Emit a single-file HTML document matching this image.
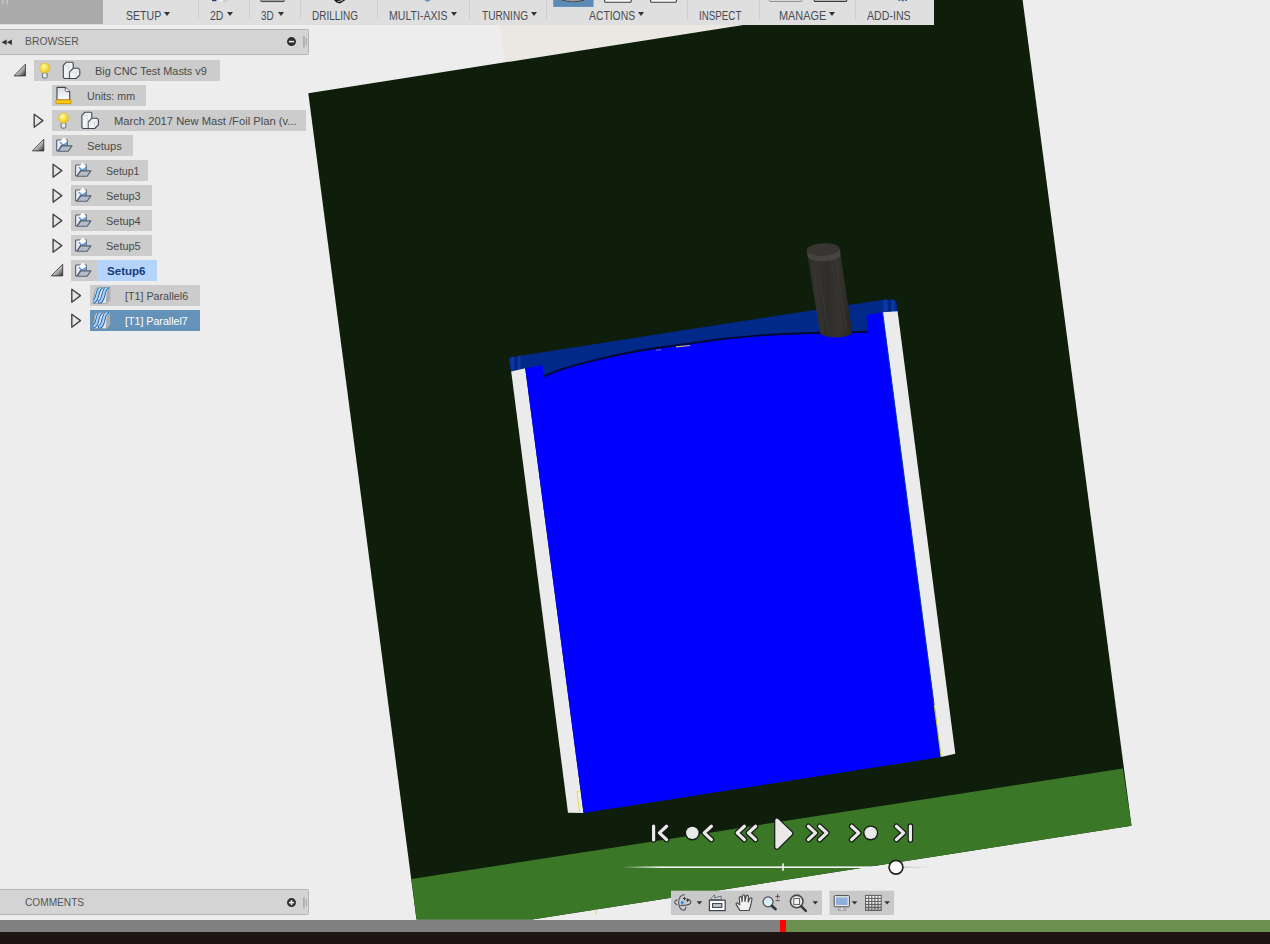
<!DOCTYPE html>
<html>
<head>
<meta charset="utf-8">
<title>Fusion 360 CAM</title>
<style>
html,body{margin:0;padding:0;}
body{width:1270px;height:944px;overflow:hidden;background:#ededed;position:relative;font-family:"Liberation Sans",sans-serif;font-size:11px;color:#4d4d4d;}
#scene{position:absolute;left:0;top:0;width:1270px;height:944px;}
.abs{position:absolute;}
/* toolbar */
#tbdark{left:0;top:0;width:103px;height:24px;background:#ababab;}
#tb{left:103px;top:0;width:830.7px;height:24px;background:#dfdfdf;}
#tbstrip{left:0;top:24px;width:933.7px;height:0.6px;background:#dfdfdf;}
.tb span{position:absolute;top:8.6px;line-height:14px;font-size:12px;color:#474b54;white-space:nowrap;transform-origin:0 0;}
.tb i{position:absolute;top:12px;width:0;height:0;border-left:3px solid transparent;border-right:3px solid transparent;border-top:4px solid #333;}
.tb b{position:absolute;top:0;width:1px;height:19px;background:#cfcfcf;}
/* browser */
.hd{left:0;width:308.6px;height:25.6px;border-radius:0 2px 2px 0;background:#d4d4d4;border-top:1px solid #b4b4b4;border-bottom:1px solid #b4b4b4;border-right:1px solid #b4b4b4;box-sizing:border-box;}
.hd span{position:absolute;left:24.6px;top:4.3px;line-height:14px;font-size:11.8px;color:#555;white-space:nowrap;transform-origin:0 0;}
.box{position:absolute;height:21px;background:#cccccc;}
.t{position:absolute;line-height:14px;font-size:11.8px;white-space:nowrap;color:#4a4a4a;margin-top:0.6px;transform-origin:0 0;}
</style>
</head>
<body>
<svg id="scene" width="1270" height="944" viewBox="0 0 1270 944">
  <defs>
    <linearGradient id="gTool" x1="0" y1="0" x2="1" y2="0"><stop offset="0" stop-color="#2b2926"/><stop offset="0.2" stop-color="#34322e"/><stop offset="0.45" stop-color="#2f2d29"/><stop offset="0.7" stop-color="#353330"/><stop offset="1" stop-color="#282623"/></linearGradient>
    <linearGradient id="gCap" x1="0" y1="0" x2="1" y2="0"><stop offset="0" stop-color="#002a8c"/><stop offset="0.3" stop-color="#0a3cb0"/><stop offset="0.5" stop-color="#001c66"/><stop offset="0.7" stop-color="#0a3cb0"/><stop offset="1" stop-color="#001f70"/></linearGradient>
  </defs>
  <!-- warm tint -->
  <polygon points="499,24 760,24 640,42 505,62" fill="#ebe7e3"/>
  <!-- dark green plane -->
  <polygon points="308.3,93.2 903,0 1022.6,0 1131.5,825.7 532,919.6 416.5,919.6" fill="#0e1e0b"/>
  <!-- light green -->
  <polygon points="411.5,879 1122.9,768.4 1131.5,825.7 532,919.6 416.5,919.6" fill="#3a7726"/>
  <!-- dark blue band -->
  <path d="M508.9,359.6 Q508.6,357.7 510.4,357.4 L530,354.3 L720,324.4 L884,299.7 L892.6,299.7 Q896,300.2 896.7,304 L897.6,311.7 L883,312.2 L868,332.6 L544,377.4 L526,368 L511.2,371.4 Z" fill="#00298a"/>
  <path d="M881.4,300.1 L884,299.7 L892.6,299.7 Q896,300.2 896.7,304 L897.6,311.7 L883,312.2 Z" fill="url(#gCap)"/>
  <path d="M508.9,359.6 Q508.6,357.7 510.4,357.3 L521.5,355.6 L523,368.6 L511.2,371.4 Z" fill="url(#gCap)"/>
  <!-- left white strip -->
  <polygon points="511.2,371.4 525.2,368.2 583.5,813 568,812.8" fill="#ebebeb"/>
  <!-- right white strip -->
  <polygon points="882.6,312.2 897.6,311.2 955.3,753.7 940.9,757" fill="#ebebeb"/>
  <!-- bright blue -->
  <path d="M525.2,368.2 L542.3,365.2 L543.9,376.4 C546.8,375.2 553.3,371.9 561.5,369.3 C569.7,366.7 582.5,363.2 593.0,360.6 C603.5,358.0 614.0,355.6 624.5,353.5 C635.0,351.4 645.5,349.6 656.0,348.0 C666.5,346.4 676.8,345.2 687.5,343.8 C698.2,342.4 706.7,340.8 720.0,339.3 C733.3,337.8 751.5,335.9 767.2,334.9 C783.0,333.8 797.7,333.5 814.5,333.0 C831.3,332.5 859.1,332.0 868.0,331.8 L866.5,314.9 L882.6,312.2 L940.9,757 L583.5,813 Z" fill="#0000ff"/>
  <!-- curve shadow -->
  <path d="M543.9,376.4 C546.8,375.2 553.3,371.9 561.5,369.3 C569.7,366.7 582.5,363.2 593.0,360.6 C603.5,358.0 614.0,355.6 624.5,353.5 C635.0,351.4 645.5,349.6 656.0,348.0 C666.5,346.4 676.8,345.2 687.5,343.8 C698.2,342.4 706.7,340.8 720.0,339.3 C733.3,337.8 751.5,335.9 767.2,334.9 C783.0,333.8 797.7,333.5 814.5,333.0 C831.3,332.5 859.1,332.0 868.0,331.8" fill="none" stroke="#000834" stroke-width="1.9"/>
  <path d="M676,346 L690,344.6" stroke="#c9b98a" stroke-width="1.2" transform="translate(0 0.9)"/><path d="M656,349.2 L661,348.6" stroke="#8a86b0" stroke-width="0.8" transform="translate(0 1)"/>
  <!-- strip edge lines -->
  <path d="M882.6,312.2 L940.9,757" stroke="#0a3f9a" stroke-width="1" fill="none"/>
  <path d="M934.3,705 L941.1,757" stroke="#e8e02a" stroke-width="0.9" fill="none"/>
  <path d="M580.6,791 L576.9,791.7 L579.6,812.6" stroke="#e8e02a" stroke-width="0.9" fill="none"/>
  <!-- tool -->
  <path d="M806.6,250 L839.6,248.6 L852.1,331.8 Q851.4,337.2 836,337.5 Q821.6,337.2 820,332.8 Z" fill="url(#gTool)"/>
  <path d="M811.5,258 L824,333 M816.5,258.6 L829,335 M831,258 L843,333 M834.6,257 L846.6,332" stroke="#3a3834" stroke-width="0.9" fill="none"/>
  <path d="M806.6,250 A16.5,6.2 -3 0 0 839.6,248.6 L840.5,254.4 A16.5,6.2 -3 0 1 807.5,255.8 Z" fill="#464440"/>
  <ellipse cx="823.1" cy="249.4" rx="16.5" ry="6.1" fill="#373532" transform="rotate(-3 823.1 249.4)"/>
  <path d="M595.5,909.4 L596,914.6" stroke="#e8e02a" stroke-width="1"/>
</svg>

<!-- toolbar -->
<div id="tbdark" class="abs"></div>
<div id="tb" class="abs"></div>
<div id="tbstrip" class="abs"></div>
<div class="tb abs" style="left:0;top:0;width:933px;height:24px;">
  <span style="left:126.4px;transform:scaleX(0.882)">SETUP</span><i style="left:163.5px"></i>
  <b style="left:198px"></b>
  <span style="left:210px;transform:scaleX(0.873)">2D</span><i style="left:226.7px"></i>
  <b style="left:249px"></b>
  <span style="left:261.2px;transform:scaleX(0.828)">3D</span><i style="left:277.6px"></i>
  <b style="left:300px"></b>
  <span style="left:312.2px;transform:scaleX(0.833)">DRILLING</span>
  <b style="left:377px"></b>
  <span style="left:389.3px;transform:scaleX(0.880)">MULTI-AXIS</span><i style="left:451.2px"></i>
  <b style="left:469px"></b>
  <span style="left:481.9px;transform:scaleX(0.843)">TURNING</span><i style="left:530.6px"></i>
  <b style="left:546px"></b>
  <span style="left:588.5px;transform:scaleX(0.864)">ACTIONS</span><i style="left:638px"></i>
  <b style="left:687px"></b>
  <span style="left:699.3px;transform:scaleX(0.815)">INSPECT</span>
  <b style="left:759px"></b>
  <span style="left:778.6px;transform:scaleX(0.907)">MANAGE</span><i style="left:828.8px"></i>
  <b style="left:855px"></b>
  <span style="left:867.2px;transform:scaleX(0.884)">ADD-INS</span>
</div>


<svg class="abs" style="left:0;top:0" width="934" height="25" viewBox="0 0 934 25">
  <rect x="2" y="0" width="1.4" height="4.4" fill="#c6c6c6"/><rect x="6.4" y="0" width="1.4" height="4.4" fill="#c6c6c6"/>
  <rect x="212" y="0" width="4.4" height="1.2" fill="#2c3f7c"/>
  <polygon points="218.8,0 229,0 223.2,3.6" fill="#c9cdd2"/><polygon points="218.8,0 223.2,0 223.2,3.6" fill="#eef0f2"/>
  <rect x="260.6" y="-2" width="23.8" height="3.6" rx="1.2" fill="#a2a2a2" stroke="#444" stroke-width="1"/>
  <path d="M334,0 L345.4,0 L340,3.4 L336.4,2.4 Z" fill="#1a1a1a"/><path d="M337.6,1.6 L342.6,0.4" stroke="#eee" stroke-width="0.8"/>
  <path d="M424.4,0 Q427.6,3.4 430.8,0 Z" fill="#6d8fc0"/>
  <rect x="553.2" y="0" width="40.3" height="6.9" fill="#5a8bb7"/>
  <path d="M562,0 Q573,3.6 584,0 Z" fill="#dcdcdc" stroke="#444" stroke-width="0.9"/>
  <rect x="604.6" y="-2" width="26.6" height="4.2" rx="1" fill="#f6f6f6" stroke="#3c3c3c" stroke-width="1.1"/>
  <rect x="650.6" y="-2" width="25.8" height="4.2" rx="1" fill="#f6f6f6" stroke="#3c3c3c" stroke-width="1.1"/>
  <rect x="769.2" y="-2" width="32.8" height="3.4" rx="1" fill="#e4e4e4" stroke="#8a8a8a" stroke-width="1"/>
  <rect x="814.2" y="-2" width="32.6" height="3.4" rx="1" fill="#dcdcdc" stroke="#3c3c3c" stroke-width="1.1"/>
  <path d="M898.4,0 h2 v1 h-2z M901.6,0 h2.4 v1.2 h-2.4z M905,0 h2 v1 h-2z" fill="#4f74b0"/>
</svg>
<!-- browser header -->
<div class="hd abs" style="top:29px"><span style="top:4.31px;transform:scaleX(0.881)">BROWSER</span></div>
<div class="hd abs" style="top:889.3px"><span style="top:4.51px;transform:scaleX(0.859)">COMMENTS</span></div>

<!-- tree -->
<div id="tree">
  <div class="box" style="left:34px;top:60px;width:186px"></div>
  <div class="t" style="left:94.5px;top:63px;transform:scaleX(0.924)">Big CNC Test Masts v9</div>
  <div class="box" style="left:52px;top:85px;width:94px"></div>
  <div class="t" style="left:87.2px;top:88px;transform:scaleX(0.906)">Units: mm</div>
  <div class="box" style="left:52px;top:110px;width:253.6px"></div>
  <div class="t" style="left:113.5px;top:113px;transform:scaleX(0.948)">March 2017 New Mast /Foil Plan (v...</div>
  <div class="box" style="left:52px;top:135px;width:81px"></div>
  <div class="t" style="left:86.9px;top:138px;transform:scaleX(0.947)">Setups</div>
  <div class="box" style="left:71px;top:160px;width:77px"></div>
  <div class="t" style="left:105.8px;top:163px;transform:scaleX(0.896)">Setup1</div>
  <div class="box" style="left:71px;top:185px;width:81px"></div>
  <div class="t" style="left:105.8px;top:188px;transform:scaleX(0.928)">Setup3</div>
  <div class="box" style="left:71px;top:210px;width:81px"></div>
  <div class="t" style="left:105.8px;top:213px;transform:scaleX(0.928)">Setup4</div>
  <div class="box" style="left:71px;top:235px;width:81px"></div>
  <div class="t" style="left:105.8px;top:238px;transform:scaleX(0.928)">Setup5</div>
  <div class="box" style="left:71px;top:260px;width:26px"></div>
  <div class="box" style="left:97px;top:260px;width:59.6px;background:#b4d4fb"></div>
  <div class="t" style="left:106.6px;top:263px;font-weight:bold;color:#163a7c;transform:scaleX(0.979)">Setup6</div>
  <div class="box" style="left:90px;top:285px;width:110px"></div>
  <div class="t" style="left:124.6px;top:288px;transform:scaleX(0.908)">[T1] Parallel6</div>
  <div class="box" style="left:90px;top:310px;width:110px;background:#6592b8"></div>
  <div class="t" style="left:124.6px;top:313px;color:#ffffff;transform:scaleX(0.903)">[T1] Parallel7</div>
</div>


<svg id="icons" class="abs" style="left:0;top:0" width="1270" height="944" viewBox="0 0 1270 944">
<defs>
  <linearGradient id="gArr" x1="0" y1="0" x2="1" y2="1"><stop offset="0.45" stop-color="#dcdcdc"/><stop offset="0.72" stop-color="#8a8a8a"/><stop offset="1" stop-color="#2c2c2c"/></linearGradient>
  <radialGradient id="gBulb" cx="0.4" cy="0.35" r="0.7"><stop offset="0" stop-color="#fffbd0"/><stop offset="0.35" stop-color="#fbe860"/><stop offset="1" stop-color="#e6c21a"/></radialGradient>
  <linearGradient id="gPage" x1="0" y1="0" x2="0" y2="1"><stop offset="0" stop-color="#d8dce2"/><stop offset="1" stop-color="#ffffff"/></linearGradient>
  <!-- expanded arrow: origin = box left/top -->
  <symbol id="exp" overflow="visible"><polygon points="-8.6,4.2 -8.6,15.9 -20,15.9" fill="url(#gArr)" stroke="#2a2a2a" stroke-width="0.8" stroke-linejoin="round"/></symbol>
  <symbol id="col" overflow="visible"><polygon points="-18.2,4.3 -9.5,10.6 -18.2,17.2" fill="#e4e5e8" stroke="#454545" stroke-width="1.4" stroke-linejoin="round"/></symbol>
  <!-- bulb: origin = center of bulb circle -->
  <symbol id="bulb" overflow="visible">
    <rect x="-2.4" y="4.6" width="4.8" height="5.4" rx="1.6" fill="#e6e9ee" stroke="#5d6675" stroke-width="1"/>
    <circle cx="0" cy="0" r="5" fill="url(#gBulb)" stroke="#d9b92a" stroke-width="0.6"/>
  </symbol>
  <!-- component: origin = (0,0) is absolute of first instance offset -->
  <symbol id="comp" overflow="visible">
    <path d="M0,3.2 L3.1,0 L9.1,0 L9.9,1.1 L9.9,6.1 L15.2,6.1 L16.5,7.7 L16.5,12.7 L12.8,16.3 L1.1,16.3 L0,15.1 Z" fill="#f1f2f4" stroke="#3f4652" stroke-width="1.1" stroke-linejoin="round"/>
    <path d="M6.2,9.8 L9.9,6.1 M6.2,9.8 L6.2,16.3" fill="none" stroke="#3f4652" stroke-width="1.1"/>
    <path d="M1,3.5 L5.4,3.5 L5.4,15.5 M6.8,10 L12.6,10 L12.6,15.6 M12.8,9.8 L16,7.4" fill="none" stroke="#d3d6db" stroke-width="0.9"/>
  </symbol>
  <symbol id="doc" overflow="visible">
    <path d="M0.6,0 L8.9,0 L13.3,4.2 L13.3,12.6 L0.6,12.6 Z" fill="url(#gPage)" stroke="#3f4652" stroke-width="1.1" stroke-linejoin="round"/>
    <path d="M8.9,0 L8.9,3 Q9,4.2 10.3,4.2 L13.3,4.2" fill="#fff" stroke="#3f4652" stroke-width="0.9"/>
    <rect x="-0.5" y="12.5" width="15.2" height="3.8" rx="1.2" fill="#ffd61e" stroke="#d48e00" stroke-width="1"/>
    <path d="M1.5,13.6 v1.6 M3.4,13.6 v1.6 M5.3,13.6 v1.6 M7.2,13.6 v1.6 M9.1,13.6 v1.6 M11,13.6 v1.6 M12.9,13.6 v1.6" stroke="#e8a500" stroke-width="0.7"/>
  </symbol>
  <!-- folder: origin = box left/top -->
  <symbol id="fold" overflow="visible">
    <path d="M4.3,5.6 Q4.3,5 5,5 L15,5 L15,10 L9.5,10 L5.8,15.8 L4.3,15.8 Z" fill="#e9ecf0" stroke="#566073" stroke-width="1.1" stroke-linejoin="round"/>
    <polygon points="11.4,2.6 15,6.2 11.4,9.6 7.8,6.2" fill="#ffffff"/>
    <path d="M7.6,7.2 L10.8,10.2 L15,7.3" fill="none" stroke="#4a96e6" stroke-width="1.2"/>
    <polygon points="5.7,16.3 9.5,10.9 19.6,10.9 15.8,16.3" fill="#b5bcc7" stroke="#566073" stroke-width="1.1" stroke-linejoin="round"/>
  </symbol>
  <!-- parallel: origin = box left/top -->
  <clipPath id="cpPar"><path d="M3,18.4 L4.4,9 Q5,4 6.6,3 L19.8,2.3 L19.8,15.2 L15.9,18.7 Z"/></clipPath>
  <symbol id="par" overflow="visible">
    <path d="M3,18.4 L4.4,9 Q5,4 6.6,3 L19.8,2.3 L19.8,15.2 L15.9,18.7 Z" fill="#e6e7e9" stroke="#8f9398" stroke-width="0.8" stroke-linejoin="round"/>
    <path d="M18.6,2.6 Q15.4,9 15.9,18.6 L19.8,15.2 L19.8,2.4 Z" fill="#a9adb3"/>
    <g clip-path="url(#cpPar)">
    <path d="M3.8,16.4 C8.2,15 6.4,5.4 10.8,2.6 M9.8,16.6 C14.2,15.2 12.4,5.4 17,2.4" fill="none" stroke="#1d5aa3" stroke-width="4" stroke-linecap="round"/>
    <path d="M3.8,16.4 C8.2,15 6.4,5.4 10.8,2.6 M9.8,16.6 C14.2,15.2 12.4,5.4 17,2.4" fill="none" stroke="#a8d4fc" stroke-width="2.2" stroke-linecap="round"/>
    </g>
  </symbol>
</defs>
<use href="#exp" x="34" y="60"/>
<use href="#bulb" x="44.8" y="68.1"/>
<use href="#comp" x="63.3" y="62.2"/>
<use href="#doc" x="56.4" y="87.4"/>
<use href="#col" x="52.4" y="110"/>
<use href="#bulb" x="63.5" y="118.1"/>
<use href="#comp" x="81.9" y="112.2"/>
<use href="#exp" x="52.4" y="135"/>
<use href="#fold" x="52.4" y="135"/>
<use href="#col" x="71.3" y="160"/>
<use href="#fold" x="71.3" y="160"/>
<use href="#col" x="71.3" y="185"/>
<use href="#fold" x="71.3" y="185"/>
<use href="#col" x="71.3" y="210"/>
<use href="#fold" x="71.3" y="210"/>
<use href="#col" x="71.3" y="235"/>
<use href="#fold" x="71.3" y="235"/>
<use href="#exp" x="71.3" y="260"/>
<use href="#fold" x="71.3" y="260"/>
<use href="#col" x="90" y="285"/>
<use href="#par" x="90" y="285"/>
<use href="#col" x="90" y="310"/>
<use href="#par" x="90" y="310"/>
<polygon points="1.6,42.2 6.6,39.4 6.6,45" fill="#333"/><polygon points="6.9,42.2 11.9,39.4 11.9,45" fill="#333"/>
<circle cx="291.5" cy="41.6" r="4.5" fill="#2e2e2e"/><rect x="288.9" y="40.8" width="5.2" height="1.6" fill="#e6e6e6"/>
<rect x="303.2" y="36" width="1.5" height="11.4" fill="#a6a6a6"/><rect x="305.9" y="38.2" width="1" height="7" fill="#a6a6a6"/>
<circle cx="291.5" cy="902.6" r="4.5" fill="#2e2e2e"/><rect x="288.9" y="901.8" width="5.2" height="1.6" fill="#e6e6e6"/><rect x="290.7" y="900" width="1.6" height="5.2" fill="#e6e6e6"/>
<rect x="303.2" y="897" width="1.5" height="11.4" fill="#a6a6a6"/><rect x="305.9" y="899.2" width="1" height="7" fill="#a6a6a6"/>
</svg>

<svg id="play" class="abs" style="left:0;top:0" width="1270" height="944" viewBox="0 0 1270 944">
<defs>
  <linearGradient id="gLine2" x1="0" y1="0" x2="1" y2="0"><stop offset="0" stop-color="#c4c4c4"/><stop offset="1" stop-color="#dcdcdc" stop-opacity="0"/></linearGradient><linearGradient id="gGrid" x1="0" y1="0" x2="0" y2="1"><stop offset="0" stop-color="#ffffff"/><stop offset="0.5" stop-color="#e8e8e8"/><stop offset="1" stop-color="#a9adb5"/></linearGradient><linearGradient id="gLine" x1="0" y1="0" x2="1" y2="0"><stop offset="0" stop-color="#f2f2f2" stop-opacity="0"/><stop offset="0.12" stop-color="#f2f2f2" stop-opacity="1"/><stop offset="0.86" stop-color="#f2f2f2" stop-opacity="1"/><stop offset="1" stop-color="#f2f2f2" stop-opacity="0"/></linearGradient>
</defs>
<g fill="none" stroke="#161a14" stroke-width="5.6" stroke-linecap="round" stroke-linejoin="round">
  <path d="M653.6,826 V840"/><path d="M666.6,826.3 L659.4,832.9 L666.6,839.6"/>
  <path d="M711.4,826.3 L704.2,832.9 L711.4,839.6"/>
  <path d="M744.4,826.3 L737.2,832.9 L744.4,839.6"/><path d="M755.6,826.3 L748.4,832.9 L755.6,839.6"/>
  <path d="M808.4,826.3 L815.6,832.9 L808.4,839.6"/><path d="M819.6,826.3 L826.8,832.9 L819.6,839.6"/>
  <path d="M851.6,826.3 L858.8,832.9 L851.6,839.6"/>
  <path d="M896.4,826.3 L903.6,832.9 L896.4,839.6"/><path d="M910.4,826 V840"/>
</g>
<circle cx="692.3" cy="832.9" r="7.5" fill="#161a14"/><circle cx="870.7" cy="832.9" r="7.5" fill="#161a14"/>
<path d="M776.9,820.2 L790.7,833.4 L776.9,847 Z" fill="#e9e9e9" stroke="#161a14" stroke-width="5.6" stroke-linejoin="round"/>
<g fill="none" stroke="#e9e9e9" stroke-width="3.2" stroke-linecap="round" stroke-linejoin="round">
  <path d="M653.6,826 V840"/><path d="M666.6,826.3 L659.4,832.9 L666.6,839.6"/>
  <path d="M711.4,826.3 L704.2,832.9 L711.4,839.6"/>
  <path d="M744.4,826.3 L737.2,832.9 L744.4,839.6"/><path d="M755.6,826.3 L748.4,832.9 L755.6,839.6"/>
  <path d="M808.4,826.3 L815.6,832.9 L808.4,839.6"/><path d="M819.6,826.3 L826.8,832.9 L819.6,839.6"/>
  <path d="M851.6,826.3 L858.8,832.9 L851.6,839.6"/>
  <path d="M896.4,826.3 L903.6,832.9 L896.4,839.6"/><path d="M910.4,826 V840"/>
</g>
<circle cx="692.3" cy="832.9" r="6.2" fill="#e9e9e9"/><circle cx="870.7" cy="832.9" r="6.2" fill="#e9e9e9"/>
<path d="M776.9,820.2 L790.7,833.4 L776.9,847 Z" fill="#e9e9e9" stroke="#e9e9e9" stroke-width="3.2" stroke-linejoin="round"/>
<!-- slider -->
<rect x="622" y="866.4" width="316" height="1.6" fill="url(#gLine)"/>
<rect x="903" y="866.5" width="36" height="1.4" fill="url(#gLine2)"/>
<rect x="782.2" y="863.4" width="1.6" height="7.4" fill="#f4f4f4"/>
<circle cx="896" cy="867.2" r="6.9" fill="#ffffff" stroke="#222" stroke-width="1.7"/>
<!-- nav toolbar -->
<rect x="671" y="890.7" width="151" height="24.3" fill="#c9c9c9"/>
<rect x="829.5" y="890.7" width="64.6" height="24.3" fill="#c9c9c9"/>
<g fill="#333">
  <polygon points="696.6,901.3 702.2,901.3 699.4,904.6"/>
  <polygon points="812.5,901.3 818.1,901.3 815.3,904.6"/>
  <polygon points="851.8,901.3 857.4,901.3 854.6,904.6"/>
  <polygon points="884.3,901.3 889.9,901.3 887.1,904.6"/>
</g>
<!-- orbit -->
<g fill="none" stroke="#4d535c" stroke-width="1.1" stroke-linecap="round">
  <path d="M684.4,894.8 C680.4,894.6 678.6,898.6 678.7,902.4 C678.8,906.6 680.6,910.6 684,910.3 C685.2,910 685.6,908.8 685.7,907.4"/>
  <path d="M677,899.9 C674,900.8 673.8,903.8 677,904.7"/>
  <path d="M687.4,899.3 C690.4,899.6 691.6,901.6 690.4,903.4 C688.8,905.4 684.6,905.5 680.9,905.4"/>
  <path d="M683.2,898.5 h2.6 M684.5,897.2 v2.6 M686.3,900.2 h2.6 M687.6,898.9 v2.6" stroke="#2e3238" stroke-width="0.9"/>
</g>
<polygon points="682.3,900.7 684.1,902.5 682.3,904.3 680.5,902.5" fill="#1e86f0"/>
<!-- look at -->
<path d="M710.2,899.6 L714.4,894.8 L714.9,898 L721,896.1 L721.3,899.6 Z" fill="#d4d7dc" stroke="#5a606a" stroke-width="0.9" stroke-linejoin="round"/>
<rect x="709.4" y="900.2" width="15.8" height="10.4" fill="#fbfbfb" stroke="#3d444d" stroke-width="1.2"/>
<rect x="712.6" y="903.6" width="9.2" height="3.8" fill="#c6cad4" stroke="#3d444d" stroke-width="1.1"/>
<!-- hand -->
<path transform="translate(744.3 902.8) scale(1.14) translate(-744 -903)" d="M740.2,909.6 L737,904.6 Q736.4,903 737.8,903 L740,904.8 L739.6,898.2 Q740.6,896.8 741.6,898.2 L742,902 L742.4,896.6 Q743.4,895.2 744.4,896.6 L744.6,901.8 L745.6,897 Q746.8,895.8 747.6,897.2 L747.4,902.4 L749,899 Q750.4,898.2 750.8,899.6 L749.4,906 L748.2,909.8 Z" fill="#f2f2f2" stroke="#4a4a4a" stroke-width="1" stroke-linejoin="round"/>
<!-- zoom +- -->
<circle cx="768.1" cy="901.9" r="5" fill="#d9ebf6" stroke="#4a4a4a" stroke-width="1.2"/>
<path d="M772,906 L775.4,909" stroke="#363c44" stroke-width="3" stroke-linecap="round"/>
<path d="M775.4,896.4 h4.4 M777.6,894.2 v4.4 M775.6,900.6 h4.2" stroke="#4a4a4a" stroke-width="0.9"/>
<!-- zoom window -->
<circle cx="796.7" cy="901.4" r="6.3" fill="#e6e6e6" stroke="#4a4a4a" stroke-width="1.6"/>
<rect x="793.8" y="898.6" width="5.8" height="5.8" fill="#f4f4f4" stroke="#555" stroke-width="0.9"/>
<path d="M801.2,906.2 L805.8,910.8" stroke="#3a3a3a" stroke-width="2.6" stroke-linecap="round"/>
<!-- display -->
<rect x="834.2" y="895.6" width="15.2" height="11.2" rx="1" fill="#e8e8e8" stroke="#4a4a4a" stroke-width="1"/>
<rect x="836" y="897.4" width="11.6" height="7.6" fill="#8fb0de"/>
<path d="M840.4,907.2 h3 v2 h2.4 v1.2 h-7.8 v-1.2 h2.4 Z" fill="#e8e8e8" stroke="#777" stroke-width="0.6"/>
<!-- grid -->
<rect x="865.6" y="895.4" width="15.6" height="15" fill="url(#gGrid)" stroke="#5a5a5a" stroke-width="1"/>
<path d="M868.7,895.4 v15 M871.8,895.4 v15 M874.9,895.4 v15 M878,895.4 v15 M865.6,898.4 h15.6 M865.6,901.4 h15.6 M865.6,904.4 h15.6 M865.6,907.4 h15.6" stroke="#5a5a5a" stroke-width="1"/>
</svg>
<!-- status bar -->
<div class="abs" style="left:0;top:919.8px;width:1270px;height:12.3px;background:#808080"></div>
<div class="abs" style="left:785px;top:919.8px;width:485px;height:12.3px;background:#6b904f"></div>
<div class="abs" style="left:779.6px;top:919.8px;width:6.4px;height:12.3px;background:#ff0000"></div>
<div class="abs" style="left:0;top:932px;width:1270px;height:12px;background:#1e1413"></div>
</body>
</html>
